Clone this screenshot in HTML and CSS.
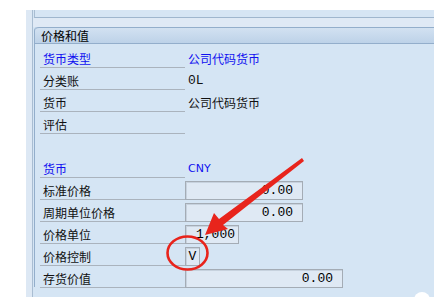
FILE: index.html
```html
<!DOCTYPE html>
<html lang="zh">
<head>
  <meta charset="UTF-8">
  <title>价格和值</title>
  <link rel="stylesheet" href="styles.css">
</head>
<body>
  <div class="screen">
    <div class="frame">
      <div class="prev-box"></div>
      <div class="gap"></div>

      <div class="group">
        <div class="group-title">价格和值</div>
        <div class="group-body">
          <div class="row">
            <div class="label link">货币类型</div>
            <div class="value link">公司代码货币</div>
          </div>
          <div class="row">
            <div class="label">分类账</div>
            <div class="value mono">0L</div>
          </div>
          <div class="row">
            <div class="label">货币</div>
            <div class="value">公司代码货币</div>
          </div>
          <div class="row">
            <div class="label">评估</div>
            <div class="value"></div>
          </div>
          <div class="row empty"></div>
          <div class="row">
            <div class="label link">货币</div>
            <div class="value link latin">CNY</div>
          </div>
          <div class="row">
            <div class="label">标准价格</div>
            <div class="value"><span class="field w-118">0.00</span></div>
          </div>
          <div class="row">
            <div class="label">周期单位价格</div>
            <div class="value"><span class="field w-118">0.00</span></div>
          </div>
          <div class="row">
            <div class="label">价格单位</div>
            <div class="value"><span class="field w-54">1,000</span></div>
          </div>
          <div class="row">
            <div class="label">价格控制</div>
            <div class="value"><span class="field w-15">V</span></div>
          </div>
          <div class="row">
            <div class="label">存货价值</div>
            <div class="value"><span class="field w-158">0.00</span></div>
          </div>
        </div>
      </div>
    </div>
  </div>

  <!-- red annotation drawn over the screenshot -->
  <svg class="marks" width="434" height="297" viewBox="0 0 434 297">
    <polygon points="205,235 214,213 219,219 302,158 304,161 223,225 228,229" fill="#e8241c"/>
    <ellipse cx="187.5" cy="253" rx="20" ry="16.5" fill="none" stroke="#e8241c" stroke-width="2.6"/>
    <circle cx="422" cy="300" r="8" fill="#fff"/>
  </svg>
</body>
</html>
```

FILE: styles.css
```css
body {
  margin: 0;
  background: #fff;
  width: 434px;
  height: 297px;
  overflow: hidden;
  position: relative;
  font-family: "Noto Sans CJK SC", "Noto Sans", sans-serif;
  font-size: 12px;
  color: #111;
}

.screen {
  margin: 10px 0 0 26px;
  height: 287px;
  background: #dde8f4;
  padding-left: 6px;
}

.frame {
  height: 100%;
  border-left: 1px solid #a9bdd2;
  background: #d5e5f4;
}

.prev-box {
  height: 7px;
  border-bottom: 1px solid #9fb6ce;
  background: #d6e5f4;
  margin-left: 1px;
  border-left: 1px solid #a9bdd2;
}

.gap {
  height: 9px;
  background: #dfe9f5;
}

.group {
  margin-left: 1px;
  border-left: 1px solid #93aecb;
  border-top-left-radius: 4px;
  background: #d5e5f4;
  height: 260px;
}

.group-title {
  height: 15px;
  line-height: 15px;
  padding-left: 6px;
  border-top: 1px solid #93aecb;
  border-bottom: 1px solid #93aecb;
  border-top-left-radius: 4px;
  background: linear-gradient(#d2e1f1, #bdd2e8);
  color: #000;
}

.group-body {
  padding: 2px 0 0 5px;
}

.row {
  display: flex;
  height: 22px;
}

.label {
  width: 142px;
  height: 17px;
  padding: 4px 0 0 3px;
  line-height: 17px;
  border-bottom: 1px solid #aab3bd;
}

.row.empty .label {
  border-bottom: none;
}

.value {
  height: 22px;
  padding-left: 3px;
  padding-top: 4px;
  box-sizing: border-box;
  line-height: 17px;
  position: relative;
}

.link {
  color: #1010f0;
}

.latin {
  font-family: "DejaVu Sans", sans-serif;
  font-size: 11px;
}

.mono {
  font-family: "Liberation Mono", monospace;
  font-size: 13px;
}

.value:has(.field) {
  padding: 0;
}

.field {
  display: block;
  margin-top: 3px;
  height: 17px;
  line-height: 17px;
  box-sizing: content-box;
  border: 1px solid #a4acb5;
  box-shadow: inset 1px 1px 0 #c7d2de;
  background: #dfe9f4;
  font-family: "Liberation Mono", monospace;
  font-size: 13px;
  color: #000;
  text-align: right;
  padding-right: 9px;
}

.w-118 { width: 107px; }
.w-158 { width: 147px; }
.w-54 { width: 49px; padding-right: 3px; }
.w-15 { width: 13px; padding-right: 0; text-align: center; }

.marks {
  position: absolute;
  left: 0;
  top: 0;
  pointer-events: none;
}
```
